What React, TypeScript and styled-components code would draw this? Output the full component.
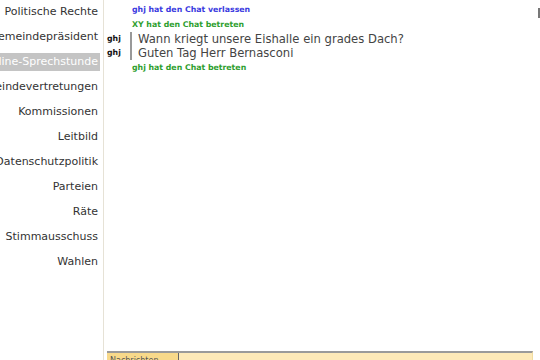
import React from "react";
import styled, { createGlobalStyle } from "styled-components";

const Global = createGlobalStyle`
  html, body { margin: 0; padding: 0; background: #fff; }
  body { width: 540px; height: 360px; overflow: hidden; font-family: "DejaVu Sans", Verdana, sans-serif; }
`;

const Page = styled.div`
  display: flex;
  width: 540px;
  height: 360px;
  overflow: hidden;
`;

const Sidebar = styled.nav`
  width: 100px;
  flex: none;
  display: flex;
  flex-direction: column;
  align-items: flex-end;
  padding-top: 3px;
  gap: 7px;
`;

const NavItem = styled.div<{ $active?: boolean }>`
  white-space: nowrap;
  flex: none;
  height: 18px;
  line-height: 18px;
  font-size: 11px;
  padding-right: 2px;
  color: ${(p) => (p.$active ? "#fff" : "#333")};
  background: ${(p) => (p.$active ? "#c4c4c4" : "transparent")};
`;

const Divider = styled.div`
  width: 1px;
  margin-left: 3px;
  background: #e6e2d6;
  flex: none;
`;

const Main = styled.div`
  flex: 1;
  display: flex;
  flex-direction: column;
`;

const ChatLog = styled.div`
  flex: 1;
  padding: 2px 0 0 3px;
  display: flex;
  flex-direction: column;
`;

const SystemLine = styled.div<{ $color: string }>`
  font-size: 7.8px;
  font-weight: bold;
  color: ${(p) => p.$color};
  padding-left: 25px;
  height: 15px;
  line-height: 15px;
`;

const MessageGroup = styled.div`
  display: grid;
  grid-template-columns: 23px 1fr;
`;

const Nicks = styled.div`
  display: flex;
  flex-direction: column;
`;

const Nick = styled.div`
  font-size: 7.8px;
  font-weight: bold;
  color: #111;
  height: 14px;
  line-height: 14px;
`;

const Messages = styled.div`
  border-left: 2px solid #999;
  padding-left: 6px;
`;

const Msg = styled.div`
  font-size: 11.6px;
  color: #444;
  height: 14px;
  line-height: 14px;
`;

const InputArea = styled.div`
  height: 7px;
  margin: 0 7px 0 3px;
  border-top: 2px solid #9a9a9a;
  background: #fde9b8;
  border-right: 1px solid #f0dca0;
  display: flex;
`;

const Tab = styled.div`
  width: 68px;
  background: #f8d98a;
  border-right: 1px solid #666;
  font-size: 8px;
  color: #555;
  padding-left: 3px;
  overflow: hidden;
  line-height: 16px;
  height: 7px;
`;

const ScrollMark = styled.div`
  position: absolute;
  right: 0;
  top: 8px;
  width: 2px;
  height: 10px;
  background: #777;
`;

const items = [
  "Politische Rechte",
  "Gemeindepräsident",
  "Online-Sprechstunde",
  "Gemeindevertretungen",
  "Kommissionen",
  "Leitbild",
  "Datenschutzpolitik",
  "Parteien",
  "Räte",
  "Stimmausschuss",
  "Wahlen",
];

export default function App() {
  return (
    <>
      <Global />
      <Page>
        <Sidebar>
          {items.map((t) => (
            <NavItem key={t} $active={t === "Online-Sprechstunde"}>
              {t}
            </NavItem>
          ))}
        </Sidebar>
        <Divider />
        <Main>
          <ChatLog>
            <SystemLine $color="#3a3ae0">ghj hat den Chat verlassen</SystemLine>
            <SystemLine $color="#2e9e2e">XY hat den Chat betreten</SystemLine>
            <MessageGroup>
              <Nicks>
                <Nick>ghj</Nick>
                <Nick>ghj</Nick>
              </Nicks>
              <Messages>
                <Msg>Wann kriegt unsere Eishalle ein grades Dach?</Msg>
                <Msg>Guten Tag Herr Bernasconi</Msg>
              </Messages>
            </MessageGroup>
            <SystemLine $color="#2e9e2e">ghj hat den Chat betreten</SystemLine>
          </ChatLog>
          <InputArea>
            <Tab>Nachrichten</Tab>
          </InputArea>
        </Main>
        <ScrollMark />
      </Page>
    </>
  );
}
